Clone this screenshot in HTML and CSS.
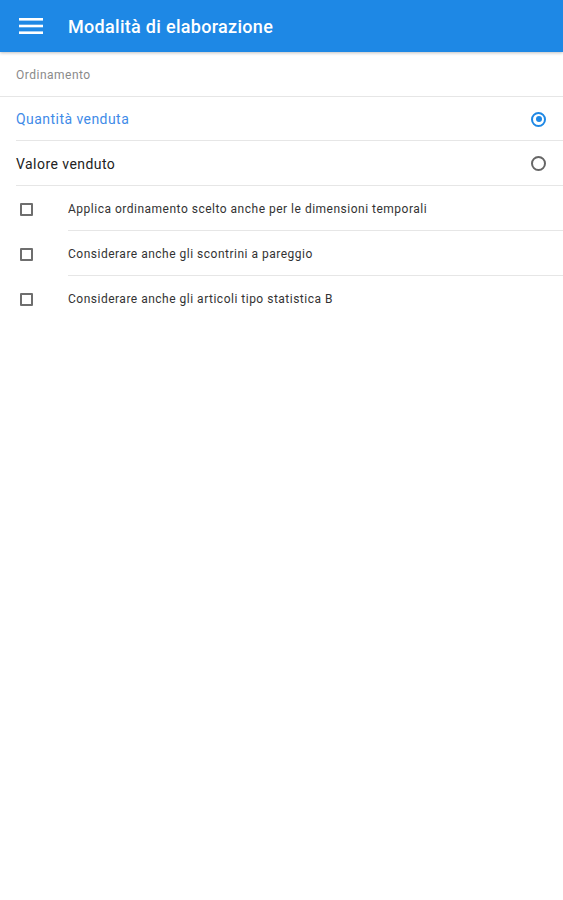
FILE: index.html
```html
<!DOCTYPE html>
<html lang="it">
<head>
<meta charset="utf-8">
<title>Modalità di elaborazione</title>
<link rel="stylesheet" href="styles.css">
</head>
<body>
<header class="appbar">
  <svg class="menu" width="24" height="16" viewBox="0 0 24 16"><rect x="0" y="0" width="24" height="2.6" fill="#fff"/><rect x="0" y="6.7" width="24" height="2.6" fill="#fff"/><rect x="0" y="13.4" width="24" height="2.6" fill="#fff"/></svg>
  <h1 class="title">Modalità di elaborazione</h1>
</header>
<main class="content">
  <div class="section-label">Ordinamento</div>
  <div class="radio-row active first">
    <span class="radio-text">Quantità venduta</span>
    <span class="radio checked"></span>
  </div>
  <div class="radio-row">
    <span class="radio-text">Valore venduto</span>
    <span class="radio"></span>
  </div>
  <div class="check-list">
    <div class="check-row">
      <span class="box-cell"><span class="box"></span></span>
      <span class="check-text">Applica ordinamento scelto anche per le dimensioni temporali</span>
    </div>
    <div class="check-row">
      <span class="box-cell"><span class="box"></span></span>
      <span class="check-text">Considerare anche gli scontrini a pareggio</span>
    </div>
    <div class="check-row">
      <span class="box-cell"><span class="box"></span></span>
      <span class="check-text last">Considerare anche gli articoli tipo statistica B</span>
    </div>
  </div>
</main>
</body>
</html>
```
FILE: styles.css
```css
* { box-sizing: border-box; }
html, body { margin: 0; padding: 0; background: #fff; }
body { font-family: Roboto, "Noto Sans", "Liberation Sans", sans-serif; color: #212121; }

.appbar {
  height: 52px;
  background: #1e88e5;
  display: flex;
  align-items: center;
  padding-left: 19px;
  box-shadow: 0 1px 3px rgba(0,0,0,0.25);
  position: relative;
  z-index: 1;
}
.menu { display: block; margin-right: 25px; }
.title {
  margin: 0;
  color: #fff;
  font-size: 18px;
  font-weight: 500;
  letter-spacing: 0.3px;
}

.section-label {
  height: 45px;
  display: flex;
  align-items: center;
  padding-left: 16px;
  padding-top: 2px;
  font-size: 12px;
  letter-spacing: 0.5px;
  color: #8a8a8a;
  border-bottom: 1px solid #e6e6e6;
}

.radio-row {
  height: 45px;
  margin-left: 16px;
  padding-right: 17px;
  padding-top: 1px;
  display: flex;
  align-items: center;
  justify-content: space-between;
  border-bottom: 1px solid #e6e6e6;
  font-size: 14px;
  letter-spacing: 0.45px;
  color: #222;
}
.radio-row.first { height: 44px; }
.radio-row.active { color: #3f8be8; }

.radio {
  width: 15px;
  height: 15px;
  border: 2px solid #666;
  border-radius: 50%;
  position: relative;
}
.radio.checked { border-color: #1e88e5; }
.radio.checked::after {
  content: "";
  position: absolute;
  left: 2.5px;
  top: 2.5px;
  width: 6px;
  height: 6px;
  border-radius: 50%;
  background: #1e88e5;
}

.check-row {
  display: flex;
  align-items: stretch;
  height: 45px;
}
.box-cell {
  width: 68px;
  display: flex;
  align-items: center;
  padding-left: 20px;
  padding-top: 1px;
}
.box {
  width: 13px;
  height: 13px;
  border: 2px solid #6e6e6e;
  border-radius: 1px;
}
.check-text {
  flex: 1;
  display: flex;
  align-items: center;
  padding-top: 1px;
  font-size: 12px;
  letter-spacing: 0.5px;
  color: #333;
  border-bottom: 1px solid #e6e6e6;
}
.check-text.last { border-bottom: none; }
```
